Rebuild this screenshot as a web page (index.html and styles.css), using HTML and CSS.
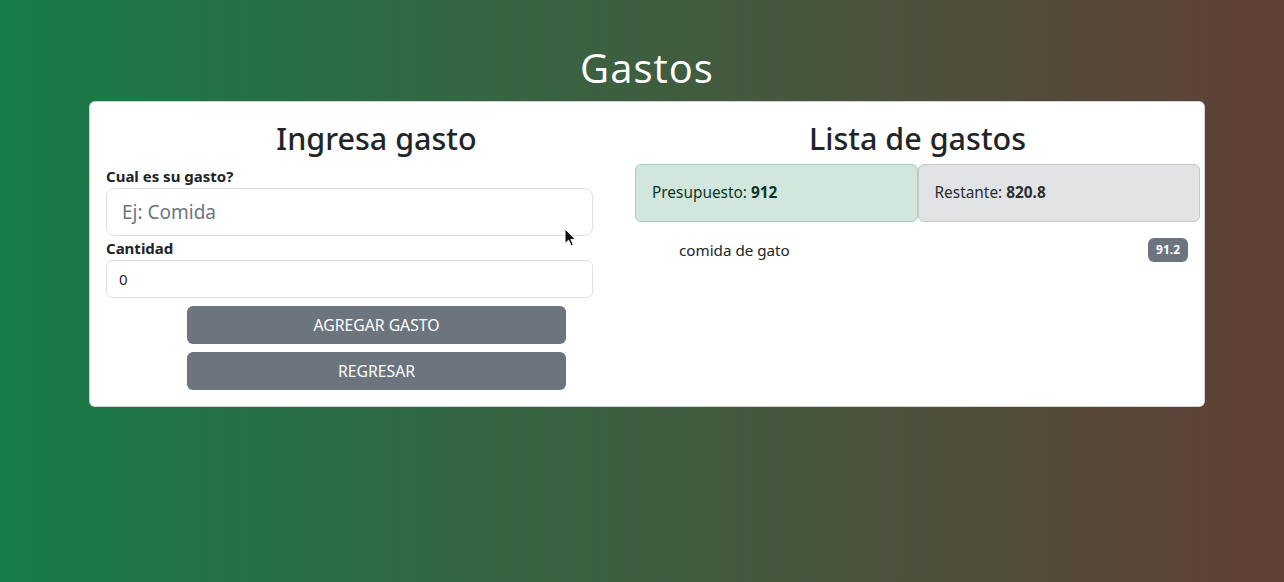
FILE: index.html
```html
<!DOCTYPE html>
<html lang="es">
<head>
<meta charset="utf-8">
<title>Gastos</title>
<link rel="stylesheet" href="styles.css">
</head>
<body>
<header class="top">
  <h1 class="brand">Gastos</h1>
</header>
<main class="card">
  <section class="col-left">
    <h2 class="heading">Ingresa gasto</h2>
    <form class="form">
      <label class="label" for="gasto">Cual es su gasto?</label>
      <input class="input input-lg" id="gasto" type="text" placeholder="Ej: Comida">
      <label class="label" for="cantidad">Cantidad</label>
      <input class="input" id="cantidad" type="number" value="0">
      <div class="actions">
        <button type="button" class="btn">Agregar gasto</button>
        <button type="button" class="btn">Regresar</button>
      </div>
    </form>
  </section>
  <section class="col-right">
    <h2 class="heading">Lista de gastos</h2>
    <div class="alerts">
      <div class="alert alert-green">Presupuesto: <strong>912</strong></div>
      <div class="alert alert-gray">Restante: <strong>820.8</strong></div>
    </div>
    <ul class="list">
      <li class="item"><span>comida de gato</span><span class="badge">91.2</span></li>
    </ul>
  </section>
  <svg class="cursor" width="13" height="20" viewBox="0 0 13 20" aria-hidden="true">
    <path d="M1 1 L1 15.5 L4.6 12.2 L7.2 18 L9.4 17 L6.9 11.4 L11.6 11.4 Z" fill="#111" stroke="#fff" stroke-width="1" stroke-linejoin="round"/>
  </svg>
</main>
</body>
</html>
```

FILE: styles.css
```css
* { box-sizing: border-box; }

html, body { height: 100%; }

body {
  margin: 0;
  min-height: 582px;
  background: linear-gradient(to right, #177c48 0%, #3e5e40 50%, #613f37 100%);
  font-family: "Noto Sans", "Open Sans", sans-serif;
  font-size: 16px;
  color: #212529;
}

.top {
  padding-top: 44px;
  display: flex;
  justify-content: center;
  padding-left: 10px;
}

.brand {
  margin: 0;
  font-family: "Open Sans", "Noto Sans", sans-serif;
  font-weight: 400;
  font-size: 40px;
  line-height: 48px;
  color: #fff;
  letter-spacing: 1px;
}

.card {
  position: relative;
  margin: 9px 0 0 89px;
  width: 1116px;
  background: #fff;
  border: 1px solid rgba(0, 0, 0, 0.175);
  border-radius: 6px;
  padding: 17px 4px 16px 16px;
  display: flex;
}

.col-left {
  width: 541px;
  flex: none;
}

.col-right {
  width: 565px;
  flex: none;
  margin-left: -12px;
}

.heading {
  margin: 0 0 7px;
  text-align: center;
  font-size: 30.5px;
  font-weight: 500;
  line-height: 38px;
  color: #212529;
}

.form {
  display: flex;
  flex-direction: column;
}

.label {
  font-weight: 700;
  font-size: 15px;
  line-height: 24px;
  display: block;
}

.input {
  width: 90%;
  height: 38px;
  border: 1px solid #dee2e6;
  border-radius: 6px;
  padding: 6px 12px;
  font-family: inherit;
  font-size: 15px;
  color: #212529;
  background: #fff;
  outline: none;
}

.input-lg {
  height: 48px;
  padding: 8px 15px;
  font-size: 19px;
  border-radius: 8px;
}

.input::placeholder { color: #6c757d; }

.actions {
  margin-top: 8px;
  display: flex;
  flex-direction: column;
  align-items: center;
  gap: 8px;
}

.btn {
  width: 70%;
  height: 38px;
  border: 0;
  border-radius: 6px;
  background: #6c757d;
  color: #fff;
  font-family: inherit;
  font-size: 15.75px;
  text-transform: uppercase;
  cursor: pointer;
}

.alerts {
  display: flex;
}

.alert {
  flex: 1;
  height: 58px;
  padding: 16px;
  border: 1px solid;
  border-radius: 6px;
  line-height: 24px;
  font-size: 15.4px;
}

.alert-green {
  background: #d1e7dd;
  border-color: #a3cfbb;
  color: #0a3622;
}

.alert-gray {
  background: #e2e3e5;
  border-color: #c4c8cb;
  color: #2b2f32;
}

.list {
  list-style: none;
  margin: 16px 0 0;
  padding: 0 0 0 32px;
}

.item {
  display: flex;
  justify-content: space-between;
  align-items: center;
  padding: 0 12px;
  line-height: 24px;
  font-size: 15.2px;
}

.badge {
  background: #6c757d;
  color: #fff;
  font-weight: 700;
  font-size: 12px;
  line-height: 24px;
  height: 24px;
  padding: 0 8px;
  border-radius: 6px;
}

.cursor {
  position: absolute;
  left: 474px;
  top: 126px;
}
```
